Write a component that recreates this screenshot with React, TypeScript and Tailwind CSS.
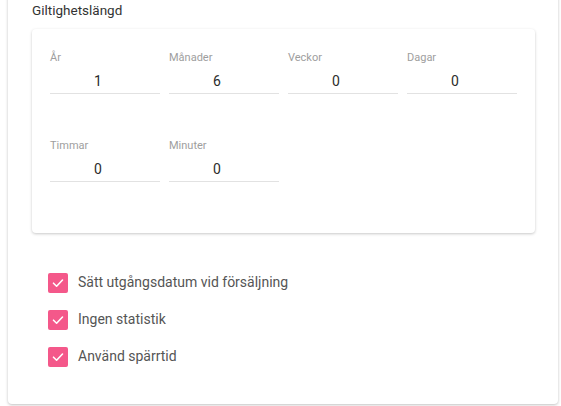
import React from 'react';

const fields = [
  { label: 'År', value: '1' },
  { label: 'Månader', value: '6' },
  { label: 'Veckor', value: '0' },
  { label: 'Dagar', value: '0' },
  { label: 'Timmar', value: '0' },
  { label: 'Minuter', value: '0' },
];

const options = ['Sätt utgångsdatum vid försäljning', 'Ingen statistik', 'Använd spärrtid'];

const Field: React.FC<{ label: string; value: string }> = ({ label, value }) => (
  <div className="w-[110px]">
    <div className="h-[16px] text-[11px] leading-[16px] text-[#9e9e9e]">{label}</div>
    <div className="mt-[5px] h-[23px] border-b border-[#e2e2e2] pr-[14px] text-center text-[14px] leading-[20px] text-[#2b2b2b]">
      {value}
    </div>
  </div>
);

const CheckRow: React.FC<{ text: string }> = ({ text }) => (
  <label className="flex items-center gap-[10px]">
    <span className="flex h-[20px] w-[20px] items-center justify-center rounded-[2px] bg-[#f4588a]">
      <svg width="14" height="14" viewBox="0 0 14 14" fill="none">
        <path d="M2.5 7.2 L5.6 10.2 L11.5 4" stroke="white" strokeWidth="1.6" strokeLinecap="round" strokeLinejoin="round" />
      </svg>
    </span>
    <span className="text-[14px] text-[#555]">{text}</span>
  </label>
);

export default function App() {
  return (
    <div className="h-[406px] w-[561px] overflow-hidden bg-white font-['Roboto',sans-serif]">
      <div className="ml-[8px] mt-[-20px] h-[424px] w-[550px] rounded-[4px] bg-white pt-[22px] shadow-[0_1px_3px_rgba(0,0,0,0.25)]">
        <div className="px-[24px]">
          <h3 className="text-[13.5px] leading-[16px] text-[#333]">Giltighetslängd</h3>
          <div className="mt-[11px] h-[204px] w-[503px] rounded-[4px] bg-white pl-[18px] pt-[21px] shadow-[0_1px_3px_rgba(0,0,0,0.22)]">
            <div className="grid w-[468px] grid-cols-[110px_110px_110px_110px] gap-x-[9px] gap-y-[44px]">
              {fields.map((f) => (
                <Field key={f.label} label={f.label} value={f.value} />
              ))}
            </div>
          </div>
          <div className="mt-[39px] flex flex-col gap-[16px] pl-[16px]">
            {options.map((o) => (
              <CheckRow key={o} text={o} />
            ))}
          </div>
        </div>
      </div>
    </div>
  );
}
